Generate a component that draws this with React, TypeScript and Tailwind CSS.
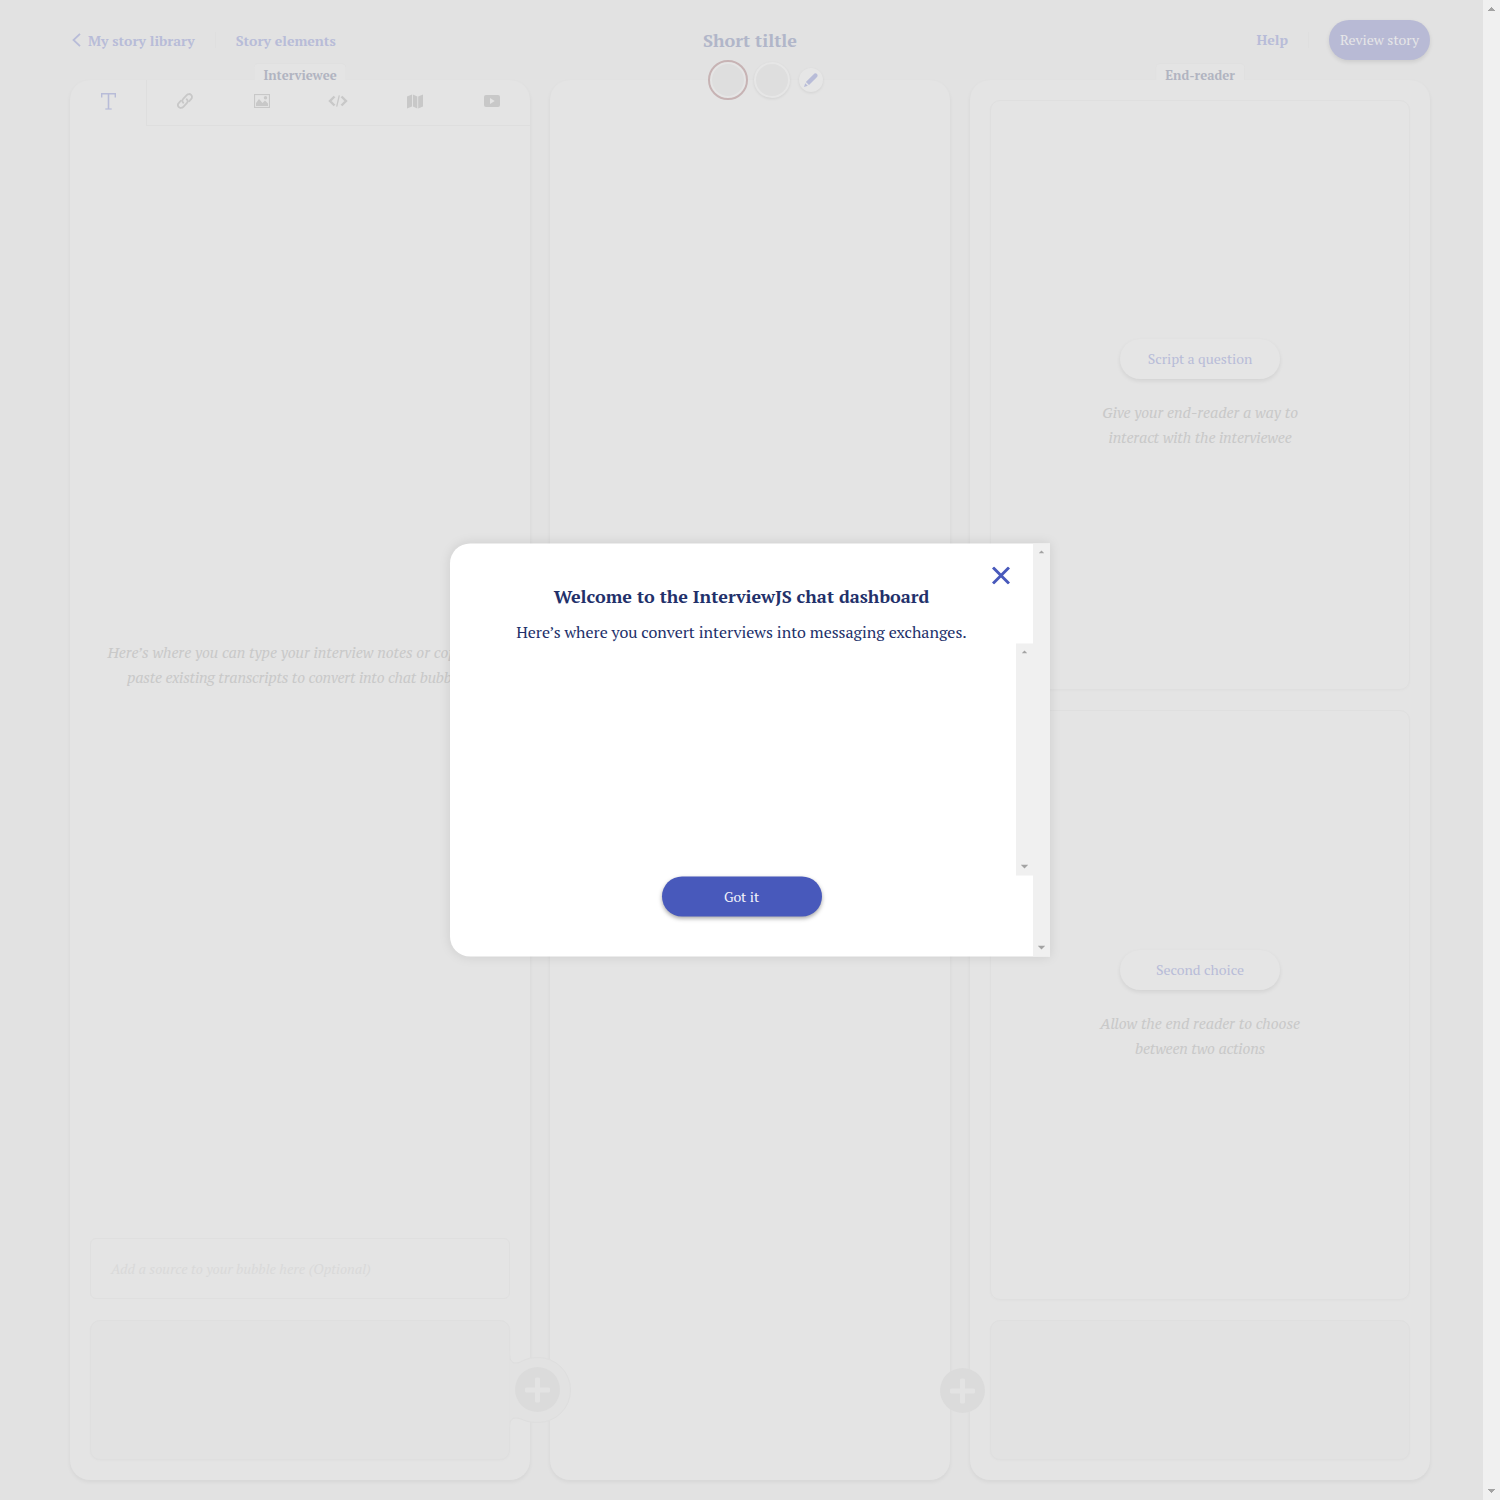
import type { ReactNode } from 'react';

function PlusIcon() {
  return (
    <svg viewBox="0 0 45 45" className="block size-[45px]">
      <circle cx="22.5" cy="22.5" r="22.5" fill="#dbdbdb" />
      <rect x="10" y="20.5" width="25" height="5" rx="1.5" fill="#e3e3e3" />
      <rect x="20" y="10.5" width="5" height="25" rx="1.5" fill="#e3e3e3" />
    </svg>
  );
}

function LinkIcon() {
  return (
    <svg width="16" height="16" viewBox="0 0 16 16" fill="none" stroke="currentColor" strokeWidth="1.8" strokeLinecap="round">
      <path d="M6.3 9.7C5 8.6 5.1 7 6.2 5.9L9.7 2.1C11 .7 12.9.7 14.1 1.9C15.3 3.1 15.3 5 14.1 6.2L12 8.4" />
      <path d="M9.7 6.3C11 7.4 10.9 9 9.8 10.1L6.3 13.9C5 15.3 3.1 15.3 1.9 14.1C.7 12.9.7 11 1.9 9.8L4 7.6" />
    </svg>
  );
}

function ImageIcon() {
  return (
    <svg width="16" height="14" viewBox="0 0 16 14">
      <rect x=".5" y=".5" width="15" height="13" fill="none" stroke="currentColor" strokeWidth="1.2" />
      <path d="M2 12V9L5 5L8.5 9L11 6.500L14 9.500V12Z" fill="currentColor" />
      <circle cx="11.500" cy="3.700" r="1.700" fill="currentColor" />
    </svg>
  );
}

function CodeIcon() {
  return (
    <svg width="20" height="12" viewBox="0 0 20 12" fill="none" stroke="currentColor">
      <path d="M6.5 1.5L2 6L6.5 10.5M13.5 1.5L18 6L13.5 10.5" strokeWidth="2.4" />
      <path d="M11.300 .3L8.7 11.7" strokeWidth="1.3" />
    </svg>
  );
}

function MapIcon() {
  return (
    <svg width="16" height="15" viewBox="0 0 16 15" fill="currentColor">
      <path d="M0 2.5L5 .5V12.5L0 14.5ZM5.9.5L10.3 2.5V14.5L5.9 12.5ZM11.2 2.5L16 .5V12.5L11.2 14.5Z" />
    </svg>
  );
}

function VideoIcon() {
  return (
    <svg width="16" height="12" viewBox="0 0 16 12">
      <rect width="16" height="12" rx="2" fill="currentColor" />
      <path d="M6 3L10.7 6L6 9Z" fill="#e4e4e4" />
    </svg>
  );
}

function ArrowUp({ small }: { small: boolean }) {
  return small ? (
    <svg width="5" height="3" viewBox="0 0 5 3" fill="#a3a3a3">
      <path d="M2 0H3V1H4V2H5V3H0V2H1V1H2Z" />
    </svg>
  ) : (
    <svg width="7" height="4" viewBox="0 0 7 4" fill="#a3a3a3">
      <path d="M3 0H4V1H5V2H6V3H7V4H0V3H1V2H2V1H3Z" />
    </svg>
  );
}

function Scrollbar({ className, small = false }: { className: string; small?: boolean }) {
  return (
    <div className={'flex w-[17px] shrink-0 flex-col items-center justify-between bg-[#f0f0f0] py-[7px] ' + className}>
      <ArrowUp small={small} />
      <svg width="7" height="4" viewBox="0 0 7 4" fill="#a3a3a3">
        <path d="M0 0H7V1H6V2H5V3H4V4H3V3H2V2H1V1H0Z" />
      </svg>
    </div>
  );
}

function Panel({ label, width, children }: { label?: ReactNode; width: string; children?: ReactNode }) {
  return (
    <section className={'relative flex h-[1400px] flex-col rounded-[20px] bg-[#e4e4e4] shadow-[0_2px_4px_rgba(0,0,0,0.055)] ' + width}>
      {label}
      {children}
    </section>
  );
}

function PanelLabel({ children }: { children: ReactNode }) {
  return (
    <div className="absolute -top-[17px] left-1/2 h-[17px] -translate-x-1/2 rounded-t-[5px] border border-b-0 border-[#e0e0e0] bg-[#e4e4e4] px-[9px] text-[13px] leading-[23px] font-bold whitespace-nowrap text-[#b1b4c1]">
      {children}
    </div>
  );
}

function ActionBox({ title, hint, className }: { title: string; hint: ReactNode; className: string }) {
  return (
    <div className={'flex h-[590px] flex-col items-center rounded-[10px] border border-[#dfdfdf] shadow-[0_1px_3px_rgba(0,0,0,0.02)] ' + className}>
      <div className="flex h-10 w-40 items-center justify-center rounded-full bg-[#e5e5e5] text-sm text-[#b8bcd8] shadow-[0_2px_4px_rgba(0,0,0,0.08)]">
        {title}
      </div>
      <p className="mt-[21px] flex flex-col items-center font-['PT_Serif_Caption','PT_Serif',serif] text-sm leading-[25px] text-[#c9c9c9] italic">
        {hint}
      </p>
    </div>
  );
}

const tabIcons = [LinkIcon, ImageIcon, CodeIcon, MapIcon, VideoIcon];

function InterviewTabs() {
  return (
    <div className="flex h-[46px] text-[#c8c8c8]">
      <div className="flex w-[76px] items-center justify-center pb-1 text-[#b8bcd8]">
        <svg width="15" height="17" viewBox="0 0 15 17" fill="none" stroke="currentColor">
          <path d="M.6 4.5V.8H14.4V4.5M7.5 .8V16" strokeWidth="1.6" />
          <path d="M4.3 16H10.7" strokeWidth="1.2" />
        </svg>
      </div>
      <div className="grid flex-1 grid-cols-5 border-b border-l border-[#dedede]">
        {tabIcons.map((Icon, i) => (
          <div key={i} className="flex items-center justify-center pb-[3px]">
            <Icon />
          </div>
        ))}
      </div>
    </div>
  );
}

function Dialog() {
  return (
    <div className="absolute top-[750px] left-[450px] flex h-[413px] w-[600px] -translate-y-1/2 overflow-hidden rounded-l-[20px] bg-white text-[#22306a] shadow-[0_0_12px_rgba(0,0,0,0.1)]">
      <div className="flex flex-1 flex-col items-center">
        <div className="flex h-[41px] w-full items-end justify-end pr-[23px]">
          <svg width="18" height="18" viewBox="0 0 18 18" stroke="#4859bb" strokeWidth="3">
            <path d="M1 1L17 17M17 1L1 17" />
          </svg>
        </div>
        <h1 className="-mt-0.5 text-lg leading-[26px] font-bold">Welcome to the InterviewJS chat dashboard</h1>
        <p className="mt-2.5 h-[25px] text-base leading-[26px]">
          Here’s where you convert interviews into messaging exchanges.
        </p>
        <div className="flex h-[232px] w-full justify-end">
          <Scrollbar small className="h-full" />
        </div>
        <button className="mt-px h-10 w-40 shrink-0 rounded-full bg-[#4859bb] text-sm text-[#f4f5fb] shadow-[0_2px_4px_rgba(0,0,0,0.35)]">
          Got it
        </button>
      </div>
      <Scrollbar small className="h-full" />
    </div>
  );
}

export default function App() {
  return (
    <div className="relative flex h-[1500px] w-[1500px] overflow-hidden bg-[#e2e2e2] font-['PT_Serif','Liberation_Serif',serif]">
      <main className="w-[1483px] shrink-0">
        <header className="grid h-20 w-[1500px] grid-cols-3 items-center pr-[70px] pl-[70px] text-sm font-bold text-[#b8bcd8]">
          <div className="flex items-center pl-0.5">
            <svg width="9" height="14" viewBox="0 0 9 14" fill="none" stroke="currentColor" strokeWidth="1.8" className="mr-[7px]">
              <path d="M8 .8L1.5 7L8 13.2" />
            </svg>
            <span className="pt-0.5">My story library</span>
            <span className="mx-5 h-4 w-px bg-[#dfdfdf]" />
            <span className="pt-0.5">Story elements</span>
          </div>
          <h2 className="text-center text-lg text-[#b1b6c9]">Short tiltle</h2>
          <div className="flex items-center justify-end">
            <span>Help</span>
            <span className="mx-5 h-4 w-px bg-[#dfdfdf]" />
            <button className="h-10 w-[101px] rounded-full bg-[#b8bad5] font-normal text-[#e6e6e8] shadow-[0_2px_4px_rgba(0,0,0,0.1)]">
              Review story
            </button>
          </div>
        </header>

        <div className="flex w-[1500px] gap-5 pl-[70px]">
          <Panel width="w-[460px]" label={<PanelLabel>Interviewee</PanelLabel>}>
            <InterviewTabs />
            <p className="mt-[515px] flex flex-col items-center font-['PT_Serif_Caption','PT_Serif',serif] text-sm leading-[24.5px] whitespace-nowrap text-[#c9c9c9] italic">
              <span className="tracking-[-0.035px]">Here’s where you can type your interview notes or copy and</span>
              <span className="tracking-[-0.2px]">paste existing transcripts to convert into chat bubbles.</span>
            </p>
            <div className="mx-5 mt-auto flex h-[61px] items-center rounded-[6px] border border-[#dfdfdf] pl-5 text-sm text-[#d9d9d9] italic">
              Add a source to your bubble here (Optional)
            </div>
            <div className="relative mx-5 mt-[21px] mb-5 h-[140px] rounded-[10px] border border-[#dfdfdf] bg-[#e2e2e2] shadow-[0_1px_3px_rgba(0,0,0,0.02)]">
              <svg width="64" height="76" viewBox="0 0 64 76" className="absolute top-[30px] left-[417px] z-10">
                <path d="M1.5 2V4C1.5 9 4 12 8 12C14 12 16 6.5 30 6.5A32.5 32.5 0 0 1 30 71.5C16 71.5 14 67 8 67C4 67 1.5 70 1.5 74V76" fill="#e2e2e2" stroke="#dedede" />
                <path d="M.5 0V76" stroke="#e2e2e2" strokeWidth="2" />
              </svg>
              <div className="absolute top-[46px] left-[424px] z-20">
                <PlusIcon />
              </div>
            </div>
          </Panel>

          <Panel width="w-[400px]">
            <div className="absolute -top-5 left-[158px] flex items-center">
              <div className="size-10 rounded-full border-2 border-[#c7b3b4] bg-[#e5e5e5] p-0.5">
                <div className="size-full rounded-full bg-[#dedede]" />
              </div>
              <div className="ml-1.5 size-9 rounded-full border-2 border-[#e6e6e6] bg-[#dedede] shadow-[0_1px_3px_rgba(0,0,0,0.08)]" />
              <div className="ml-[9px] flex size-6 items-center justify-center rounded-full bg-[#e6e6e6] text-[#b8bcd8] shadow-[0_1px_3px_rgba(0,0,0,0.08)]">
                <svg width="14" height="14" viewBox="0 0 14 14" fill="currentColor">
                  <path d="M0 14L1.2 10.2L3.8 12.8ZM1.9 9L9.2 1.7Q11.5-.6 13 1Q14.5 2.6 12.3 4.8L5 12.1Z" />
                </svg>
              </div>
            </div>
            <div className="absolute top-[1287.5px] left-[390px] z-10">
              <PlusIcon />
            </div>
          </Panel>

          <Panel width="w-[460px]" label={<PanelLabel>End-reader</PanelLabel>}>
            <div className="flex flex-col gap-5 p-5">
              <ActionBox
                className="pt-[238px]"
                title="Script a question"
                hint={
                  <>
                    <span className="tracking-[-0.05px]">Give your end-reader a way to</span>
                    <span className="tracking-[-0.14px]">interact with the interviewee</span>
                  </>
                }
              />
              <ActionBox
                className="pt-[239px]"
                title="Second choice"
                hint={
                  <>
                    <span className="tracking-[-0.05px]">Allow the end reader to choose</span>
                    <span className="tracking-[-0.17px]">between two actions</span>
                  </>
                }
              />
              <div className="h-[140px] rounded-[10px] border border-[#dfdfdf] bg-[#e2e2e2] shadow-[0_1px_3px_rgba(0,0,0,0.02)]" />
            </div>
          </Panel>
        </div>
      </main>
      <Scrollbar className="relative h-[1500px]" />
      <Dialog />
    </div>
  );
}
